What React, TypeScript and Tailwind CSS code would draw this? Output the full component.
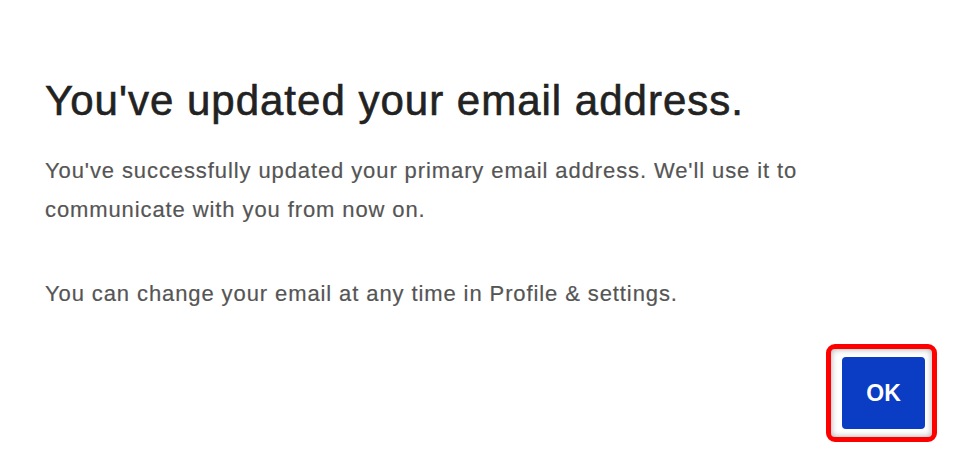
export default function App() {
  return (
    <div className="w-[963px] h-[453px] bg-white overflow-hidden" style={{ fontFamily: '"Liberation Sans", Arial, sans-serif' }}>
      <div className="pl-[45px] pt-[77px]">
        <h1 className="text-[42px] leading-[48px] tracking-[1px] text-[#222222] font-normal [-webkit-text-stroke:0.6px_#222222]">You've updated your email address.</h1>
        <p className="mt-[26px] text-[22px] leading-[39px] tracking-[0.9px] text-[#555555] [-webkit-text-stroke:0.2px_#555555]">
          You've successfully updated your primary email address. We'll use it to<br />communicate with you from now on.
        </p>
        <p className="mt-[45px] text-[22px] leading-[39px] tracking-[0.9px] text-[#555555] [-webkit-text-stroke:0.2px_#555555]">You can change your email at any time in Profile &amp; settings.</p>
      </div>
      <div className="flex justify-end pr-[26px] mt-[31px]">
        <div className="w-[111px] h-[98px] rounded-[9px] border-[5px] border-[#ff0000] flex items-center justify-center pl-[4px] shadow-[inset_0_0_6px_rgba(0,0,0,0.35)]">
          <button className="w-[83px] h-[72px] rounded-[4px] bg-[#0a3cc4] text-white text-[23px] font-bold">OK</button>
        </div>
      </div>
    </div>
  );
}
